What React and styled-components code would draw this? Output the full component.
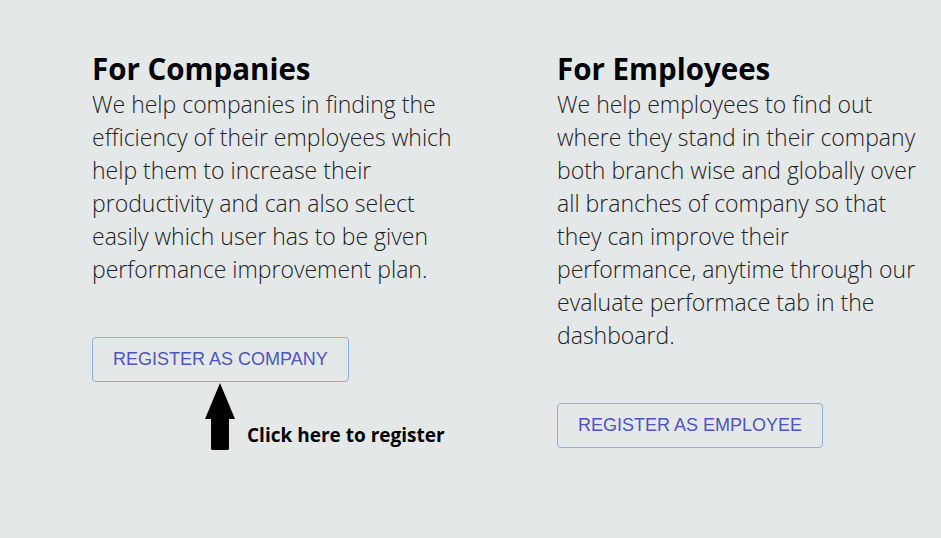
import React from "react";
import styled, { createGlobalStyle } from "styled-components";

const Global = createGlobalStyle`
  html, body { margin: 0; padding: 0; background: #e5e8e9; }
  body { font-family: "Open Sans", "Noto Sans", sans-serif; }
`;

const Page = styled.div`
  width: 941px;
  height: 538px;
  box-sizing: border-box;
  padding: 50px 0 0 92px;
  display: flex;
  align-items: flex-start;
  overflow: hidden;
`;

const Column = styled.section`
  width: ${(p) => p.$width}px;
  flex: none;
  display: flex;
  flex-direction: column;
  align-items: flex-start;
`;

const Heading = styled.h2`
  margin: 0;
  font-family: "Open Sans", sans-serif;
  font-weight: 700;
  font-size: 29.5px;
  line-height: 38px;
  color: #000;
`;

const Body = styled.p`
  margin: 0;
  font-family: "Open Sans", sans-serif;
  font-weight: 300;
  font-size: 23px;
  line-height: 33px;
  color: #222;
  white-space: nowrap;
`;

const Button = styled.button`
  margin-top: 51px;
  height: 45px;
  padding: 0 20px;
  box-sizing: border-box;
  background: transparent;
  border: 1px solid #8cb0d8;
  border-radius: 4px;
  color: #4c55c0;
  font-family: "Liberation Sans", Arial, sans-serif;
  font-size: 18px;
  text-transform: uppercase;
  cursor: pointer;
`;

const Hint = styled.div`
  display: flex;
  align-items: flex-end;
  margin: 1px 0 0 113px;
`;

const HintText = styled.span`
  margin: 0 0 3px 12px;
  font-family: "Open Sans", sans-serif;
  font-weight: 700;
  font-size: 19px;
  color: #000;
`;

const Arrow = () => (
  <svg width="30" height="68" viewBox="0 0 30 68">
    <polygon points="15,0 30,36 24,36 24,66 23,67 7,67 6,66 6,36 0,36" fill="#000" />
  </svg>
);

export default function App() {
  return (
    <>
      <Global />
      <Page>
        <Column $width={465}>
          <Heading>For Companies</Heading>
          <Body>
            We help companies in finding the
            <br />
            efficiency of their employees which
            <br />
            help them to increase their
            <br />
            productivity and can also select
            <br />
            easily which user has to be given
            <br />
            performance improvement plan.
          </Body>
          <Button>Register as company</Button>
          <Hint>
            <Arrow />
            <HintText>Click here to register</HintText>
          </Hint>
        </Column>
        <Column $width={384}>
          <Heading>For Employees</Heading>
          <Body>
            We help employees to find out
            <br />
            where they stand in their company
            <br />
            both branch wise and globally over
            <br />
            all branches of company so that
            <br />
            they can improve their
            <br />
            performance, anytime through our
            <br />
            evaluate performace tab in the
            <br />
            dashboard.
          </Body>
          <Button>Register as employee</Button>
        </Column>
      </Page>
    </>
  );
}
